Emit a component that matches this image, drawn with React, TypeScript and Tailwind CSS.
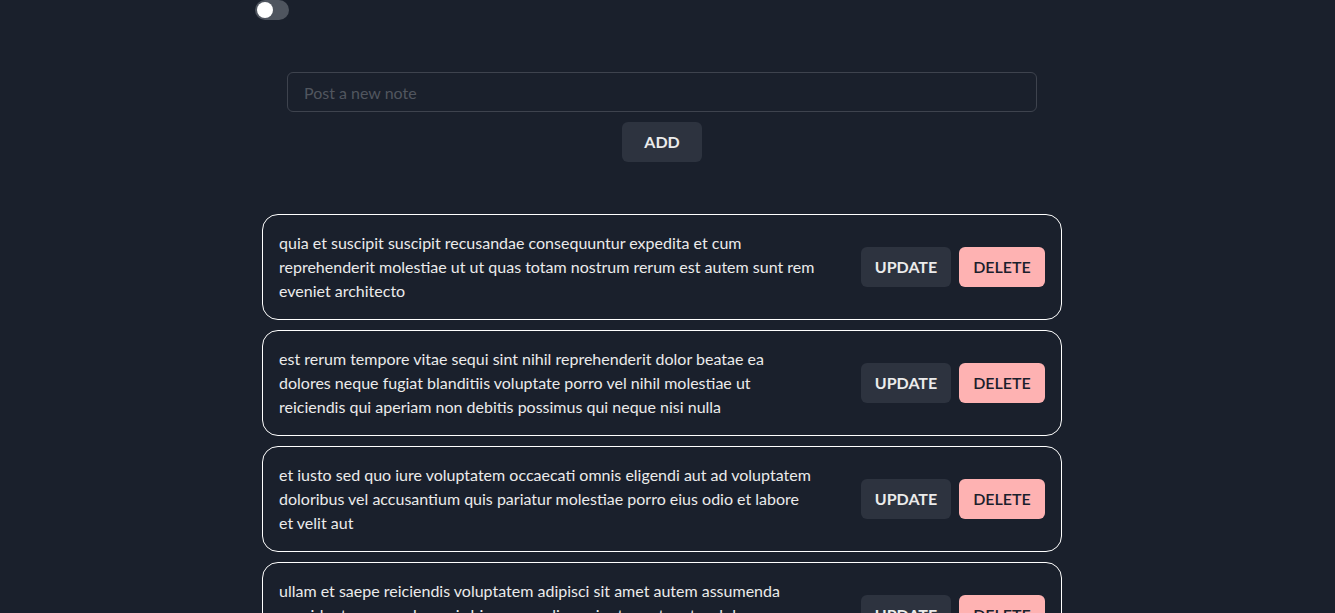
import { useState } from 'react';

const NOTES = [
  'quia et suscipit suscipit recusandae consequuntur expedita et cum reprehenderit molestiae ut ut quas totam nostrum rerum est autem sunt rem eveniet architecto',
  'est rerum tempore vitae sequi sint nihil reprehenderit dolor beatae ea dolores neque fugiat blanditiis voluptate porro vel nihil molestiae ut reiciendis qui aperiam non debitis possimus qui neque nisi nulla',
  'et iusto sed quo iure voluptatem occaecati omnis eligendi aut ad voluptatem doloribus vel accusantium quis pariatur molestiae porro eius odio et labore et velit aut',
  'ullam et saepe reiciendis voluptatem adipisci sit amet autem assumenda provident rerum culpa quis hic commodi nesciunt rem tenetur doloremque ipsam iure quis sunt voluptatem rerum illo velit',
  'repudiandae veniam quaerat sunt sed alias aut fugiat sit autem sed est voluptatem omnis possimus esse voluptatibus quis est aut tenetur dolor neque',
];

export default function App() {
  const [dark, setDark] = useState(false);

  return (
    <div className="min-h-screen bg-[#1a202c] text-[#ebebeb] font-['Lato',sans-serif] pr-[11px]">
      <div className="w-[814px] mx-auto">
        <button
          onClick={() => setDark(!dark)}
          className="w-[34px] h-[20px] rounded-full bg-[#4f555f] p-[2px] flex items-center"
        >
          <span className="w-4 h-4 rounded-full bg-white block" />
        </button>
      </div>

      <div className="w-[750px] mx-auto mt-[52px] flex flex-col items-center gap-[10px]">
        <input
          placeholder="Post a new note"
          className="w-full h-10 px-4 rounded-md border border-[#3e434e] bg-transparent text-base outline-none placeholder:text-[#51565f]"
        />
        <button className="w-20 h-10 rounded-md bg-[#2d333f] font-bold text-base">ADD</button>
      </div>

      <div className="w-[800px] mx-auto mt-[52px] flex flex-col gap-[10px]">
        {NOTES.map((n, i) => (
          <div
            key={i}
            className="border border-white rounded-2xl px-4 py-4 flex items-center justify-between gap-4"
          >
            <p className="w-[536px] text-base leading-6">{n}</p>
            <div className="flex gap-2 shrink-0">
              <button className="w-[90px] h-10 rounded-md bg-[#2d333f] font-bold text-base">UPDATE</button>
              <button className="w-[86px] h-10 rounded-md bg-[#feb2b2] text-[#1a202c] font-semibold text-base">
                DELETE
              </button>
            </div>
          </div>
        ))}
      </div>
    </div>
  );
}
